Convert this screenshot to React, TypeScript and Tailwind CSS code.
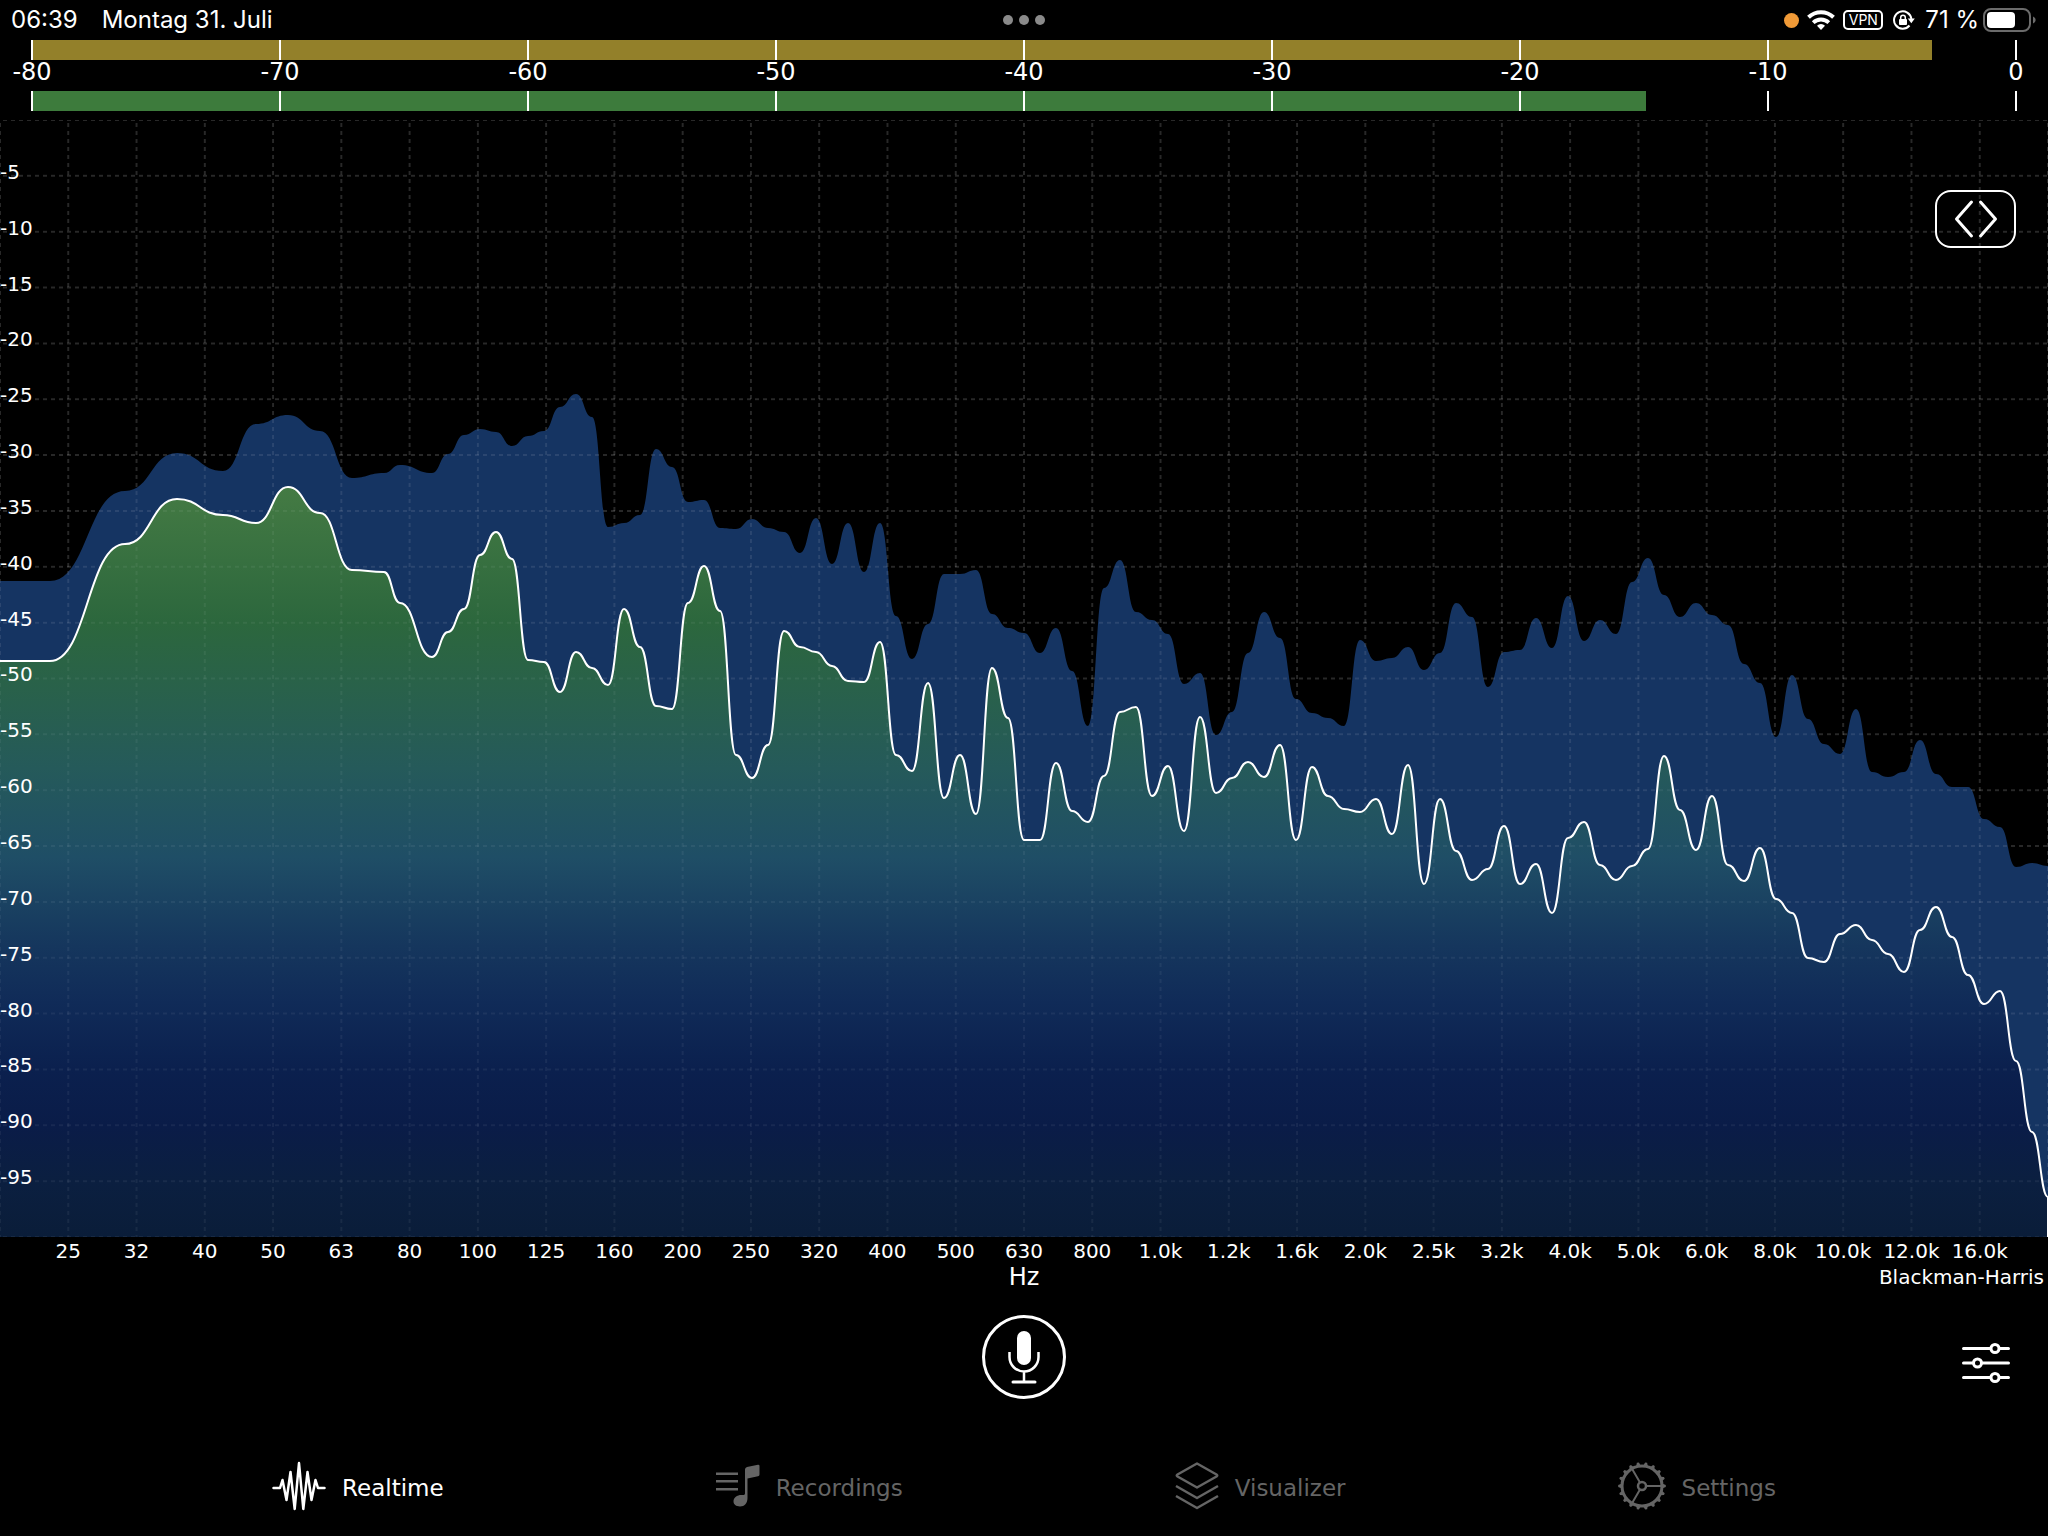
const meterScale = [-80, -70, -60, -50, -40, -30, -20, -10, 0];

const levels = [
  -5, -10, -15, -20, -25, -30, -35, -40, -45, -50, -55, -60, -65, -70, -75, -80, -85, -90, -95,
];

const bands = [
  "25", "32", "40", "50", "63", "80", "100", "125", "160", "200", "250", "320", "400", "500", "630",
  "800", "1.0k", "1.2k", "1.6k", "2.0k", "2.5k", "3.2k", "4.0k", "5.0k", "6.0k", "8.0k", "10.0k",
  "12.0k", "16.0k",
];

const WIDTH = 2048;
const HEIGHT = 1117;
const STEP = 16;

// the lowest bins are wider apart, above 432 they are evenly spaced
const lowBins = [0, 50, 125, 177, 223, 256, 288, 320, 352, 384, 400];

const live = [
  541, 541, 424, 379, 395, 403, 367, 393, 450, 452, 483, 537, 512, 489, 435, 412, 439, 540, 542, 572,
  532, 548, 565, 489, 527, 586, 589, 483, 446, 491, 635, 658, 625, 511, 527, 532, 546, 561, 562, 522,
  635, 651, 563, 678, 635, 694, 548, 598, 720, 720, 643, 691, 702, 656, 592, 587, 676, 646, 711, 597,
  673, 658, 642, 657, 625, 720, 647, 676, 689, 692, 679, 714, 645, 764, 679, 731, 760, 749, 706, 764,
  744, 793, 718, 702, 745, 760, 746, 729, 636, 690, 730, 676, 745, 761, 728, 779, 793, 838, 842, 814,
  805, 820, 834, 852, 810, 787, 817, 855, 884, 871, 941, 1012, 1077,
];

const peak = [
  461, 461, 371, 333, 351, 304, 295, 311, 358, 353, 345, 353, 334, 315, 309, 312, 326, 316, 311, 287,
  274, 297, 407, 403, 395, 329, 347, 382, 380, 408, 409, 399, 408, 412, 433, 398, 444, 403, 452, 403,
  496, 539, 504, 454, 454, 450, 494, 508, 513, 533, 508, 551, 606, 468, 440, 492, 500, 514, 564, 553,
  615, 592, 533, 492, 518, 579, 593, 598, 606, 520, 541, 538, 527, 550, 533, 483, 497, 567, 532, 530,
  498, 528, 476, 521, 500, 514, 462, 438, 475, 497, 483, 495, 505, 544, 563, 617, 555, 599, 624, 634,
  589, 652, 657, 652, 620, 654, 667, 667, 699, 707, 747, 743, 746,
];

const binX = (i: number) =>
  i < lowBins.length ? lowBins[i] : 432 + (i - lowBins.length) * STEP;

// horizontal tangents in every bin
const curve = (values: number[]) =>
  values.reduce((d, y, i) => {
    if (i === 0) return `M0 ${y}`;
    const mid = (binX(i - 1) + binX(i)) / 2;
    return `${d}C${mid} ${values[i - 1]} ${mid} ${y} ${binX(i)} ${y}`;
  }, "");

const area = (values: number[]) => `${curve(values)}V${HEIGHT}H0Z`;

const Grid = ({ opacity }: { opacity: number }) => (
  <g stroke="#fff" strokeOpacity={opacity} strokeWidth="2" strokeDasharray="4 4">
    {Array.from({ length: 31 }, (_, i) => {
      const x = (i * WIDTH) / 30;
      return <line key={`v${i}`} x1={x} x2={x} y1="3" y2={HEIGHT} />;
    })}
    {Array.from({ length: 21 }, (_, i) => {
      const y = (i * HEIGHT) / 20;
      return <line key={`h${i}`} x1="3" x2={WIDTH} y1={y} y2={y} />;
    })}
  </g>
);

// the grid is repeated between the fills so that it fades towards the front
const Spectrum = () => (
  <svg viewBox={`0 0 ${WIDTH} ${HEIGHT}`} className="block h-auto w-full" role="img" aria-label="Spectrum">
    <defs>
      <linearGradient id="live" gradientUnits="userSpaceOnUse" x1="0" x2="0" y1="0" y2={HEIGHT}>
        <stop offset="0.32" stopColor="#467c44" />
        <stop offset="0.45" stopColor="#2c673d" />
        <stop offset="0.58" stopColor="#255a5a" />
        <stop offset="0.66" stopColor="#1f4e66" />
        <stop offset="0.74" stopColor="#15365d" />
        <stop offset="0.79" stopColor="#102b58" />
        <stop offset="0.85" stopColor="#0b204e" />
        <stop offset="0.9" stopColor="#0a1c48" />
        <stop offset="0.95" stopColor="#0b1f40" />
        <stop offset="1" stopColor="#0a1d39" />
      </linearGradient>
    </defs>
    <Grid opacity={0.07} />
    <path d={area(peak)} fill="#153462" />
    <Grid opacity={0.04} />
    <path d={area(live)} fill="url(#live)" />
    <Grid opacity={0.06} />
    <path d={`${curve(live)}V${HEIGHT}`} fill="none" stroke="#fff" strokeWidth="2" strokeLinejoin="round" />
  </svg>
);

const MeterBar = ({ value, color }: { value: number; color: string }) => (
  <div className="relative h-5">
    <div className={`h-full ${color}`} style={{ width: `${((value + 80) / 80) * 100}%` }} />
    <div className="absolute inset-y-0 -right-px -left-px flex justify-between">
      {meterScale.map((v) => (
        <span key={v} className="w-0.5 bg-white" />
      ))}
    </div>
  </div>
);

const StatusBar = () => (
  <header className="grid h-10 grid-cols-3 items-center px-[11px] font-[Inter,sans-serif] text-2xl">
    <div className="flex gap-6">
      <span>06:39</span>
      <span>Montag 31. Juli</span>
    </div>
    <div className="flex justify-center gap-1.5">
      <span className="size-2.5 rounded-full bg-[#8a8a8a]" />
      <span className="size-2.5 rounded-full bg-[#8a8a8a]" />
      <span className="size-2.5 rounded-full bg-[#8a8a8a]" />
    </div>
    <div className="flex items-center justify-end">
      <span className="mr-2 size-[15px] rounded-full bg-[#f09a37]" />
      <svg className="mr-2 h-5 w-7" viewBox="0 0 28 20" fill="none" stroke="#fff">
        <path d="M1.5 7.2a18 18 0 0 1 25 0" strokeWidth="4" />
        <path d="M6.2 12.6a11.3 11.3 0 0 1 15.6 0" strokeWidth="3.8" />
        <path d="M14 20l-4-4.300a5.800 5.800 0 0 1 8 0z" fill="#fff" stroke="none" />
      </svg>
      <span className="mr-2.5 flex h-5 w-10 items-center justify-center rounded-[5px] border-2 border-white text-sm leading-4">
        VPN
      </span>
      <svg className="mr-2.5 h-5 w-[22px]" viewBox="0 0 22 20" fill="none" stroke="#fff" strokeWidth="2">
        <path d="M16.500 15.500A8.700 8.700 0 1 1 18.400 9" />
        <path d="M14.800 8.500h7l-3.500 4.800z" fill="#fff" stroke="none" />
        <rect x="6" y="9" width="8" height="6" rx="1" fill="#fff" stroke="none" />
        <path d="M7.700 9.500V7.500a2.300 2.300 0 0 1 4.600 0v2" strokeWidth="1.500" />
      </svg>
      <span className="mr-1">71 %</span>
      <svg className="h-6 w-[54px]" viewBox="0 0 54 24" fill="none">
        <rect x="1" y="1" width="46" height="22" rx="7" stroke="#6b6b6b" strokeWidth="2" />
        <rect x="4" y="4" width="28" height="16" rx="4" fill="#fff" />
        <path d="M50 8.500c3.500 1.500 3.500 5.500 0 7z" fill="#6b6b6b" />
      </svg>
    </div>
  </header>
);

const WaveIcon = () => (
  <svg className="h-[50px] w-[54px]" viewBox="0 0 54 50" fill="none" stroke="currentColor" strokeWidth="2.500" strokeLinejoin="round" strokeLinecap="round">
    <path d="M1.500 27H8l2.500-8 4 20 4-28 4.200 37L27 2l4.300 46 4.200-37 4 28 4-20 2.500 8h6.500" />
  </svg>
);

const NoteIcon = () => (
  <svg className="h-11 w-11" viewBox="0 0 44 44" fill="currentColor">
    <path d="M0 8.500h22v2.500H0zM0 16h22v2.500H0zM0 24h22v2.500H0z" />
    <path d="M29 5.500Q29 3.500 31 3L42 .700Q43.500 .500 43.500 2v8.500Q43.500 12 42 12.300L31.500 14.500V34c0 5-3 8.500-7.500 8.500-4 0-6.500-2-6.500-5.200 0-3.600 3.500-6.300 8-6.300 2 0 3.500.2 3.500-1.500z" />
  </svg>
);

const LayersIcon = () => (
  <svg className="h-12 w-11" viewBox="0 0 44 48" fill="none" stroke="currentColor" strokeWidth="2.500" strokeLinejoin="round">
    <path d="M22 1.500 41.500 12.500Q43 13.500 41.500 14.500L22 25.500 2.500 14.500Q1 13.500 2.500 12.500z" />
    <path d="M1 24l21 12 21-12M1 34l21 12 21-12" />
  </svg>
);

const teeth = Array.from({ length: 18 }, (_, i) => i * 20);

const GearIcon = () => (
  <svg className="size-12" viewBox="0 0 48 48" fill="none" stroke="currentColor" strokeWidth="2.500">
    <circle cx="24" cy="24" r="20" strokeWidth="3" />
    <circle cx="24" cy="24" r="4" />
    <path d="M28 24h16M22 20.500 14 6.700M22 27.500 14 41.300" strokeWidth="2" />
    {teeth.map((a) => (
      <path key={a} d="M44 21.500l3.800 1.500v2L44 26.500z" fill="currentColor" stroke="none" transform={`rotate(${a} 24 24)`} />
    ))}
  </svg>
);

const tabs = [
  { label: "Realtime", Icon: WaveIcon, active: true },
  { label: "Recordings", Icon: NoteIcon },
  { label: "Visualizer", Icon: LayersIcon },
  { label: "Settings", Icon: GearIcon },
];

const App = () => (
  <div className="min-h-screen bg-black font-['DejaVu_Sans',sans-serif] text-white">
    <StatusBar />

    <section className="mx-8 mb-[9px]">
      <MeterBar value={-3.4} color="bg-[#93802a]" />
      <div className="flex h-[31px] items-start justify-between text-2xl leading-6">
        {meterScale.map((v) => (
          <span key={v} className="flex w-0 justify-center">{v}</span>
        ))}
      </div>
      <MeterBar value={-14.9} color="bg-[#3d7b3c]" />
    </section>

    <main>
      <div className="relative text-xl leading-6">
        <Spectrum />
        <div className="absolute inset-0 grid grid-rows-20">
          {levels.map((v) => (
            <div key={v} className="flex items-end">
              <span className="-mb-2">{v}</span>
            </div>
          ))}
        </div>
        <button
          type="button"
          aria-label="Expand"
          className="absolute top-[70px] right-8 flex h-[58px] w-[81px] items-center justify-center rounded-2xl border-2 border-white"
        >
          <svg className="h-10 w-11" viewBox="0 0 44 40" fill="none" stroke="#fff" strokeWidth="3" strokeLinecap="round" strokeLinejoin="round">
            <path d="M17.500 3 2.500 20l15 17M26.500 3l15 17-15 17" />
          </svg>
        </button>
      </div>
      <div className="flex pt-0.5 text-xl leading-6">
        <span className="flex-1" />
        {bands.map((b) => (
          <span key={b} className="flex min-w-0 flex-2 justify-center">{b}</span>
        ))}
        <span className="flex-1" />
      </div>
      <div className="grid h-7 grid-cols-3 items-center px-1 text-2xl leading-7">
        <span className="col-start-2 text-center">Hz</span>
        <span className="text-right text-xl leading-7">Blackman-Harris</span>
      </div>
    </main>

    <div className="mt-6 grid h-[84px] grid-cols-3 items-center px-[38px]">
      <button
        type="button"
        aria-label="Record"
        className="col-start-2 flex size-[84px] items-center justify-center justify-self-center rounded-full border-3 border-white"
      >
        <svg className="h-14 w-8" viewBox="0 0 32 56" fill="none" stroke="#fff">
          <rect x="9" y="2" width="14" height="34" rx="7" fill="#fff" stroke="none" />
          <path d="M1.500 23v5a14.500 14.500 0 0 0 29 0v-5M16 43v10" strokeWidth="2.500" />
          <path d="M5 53h22" strokeWidth="3" strokeLinecap="round" />
        </svg>
      </button>
      <button type="button" aria-label="Filters" className="mt-3 justify-self-end">
        <svg className="h-[42px] w-12" viewBox="0 0 48 42" fill="none" stroke="#fff" strokeWidth="3" strokeLinecap="round">
          <path d="M1.500 6.500H28M38 6.500h8.500M1.500 21H10.500M20.500 21h26M1.500 35.500H28M38 35.500h8.500" />
          <circle cx="33" cy="6.500" r="4" />
          <circle cx="15.500" cy="21" r="4" />
          <circle cx="33" cy="35.500" r="4" />
        </svg>
      </button>
    </div>

    <nav className="mt-[60px] flex h-[54px] items-center justify-evenly text-[23px] leading-7">
      {tabs.map(({ label, Icon, active }) => (
        <a key={label} href="#" className={`flex items-center gap-4 ${active ? "text-white" : "text-[#656565]"}`}>
          <Icon />
          <span className="pt-1">{label}</span>
        </a>
      ))}
    </nav>
  </div>
);

export default App;
